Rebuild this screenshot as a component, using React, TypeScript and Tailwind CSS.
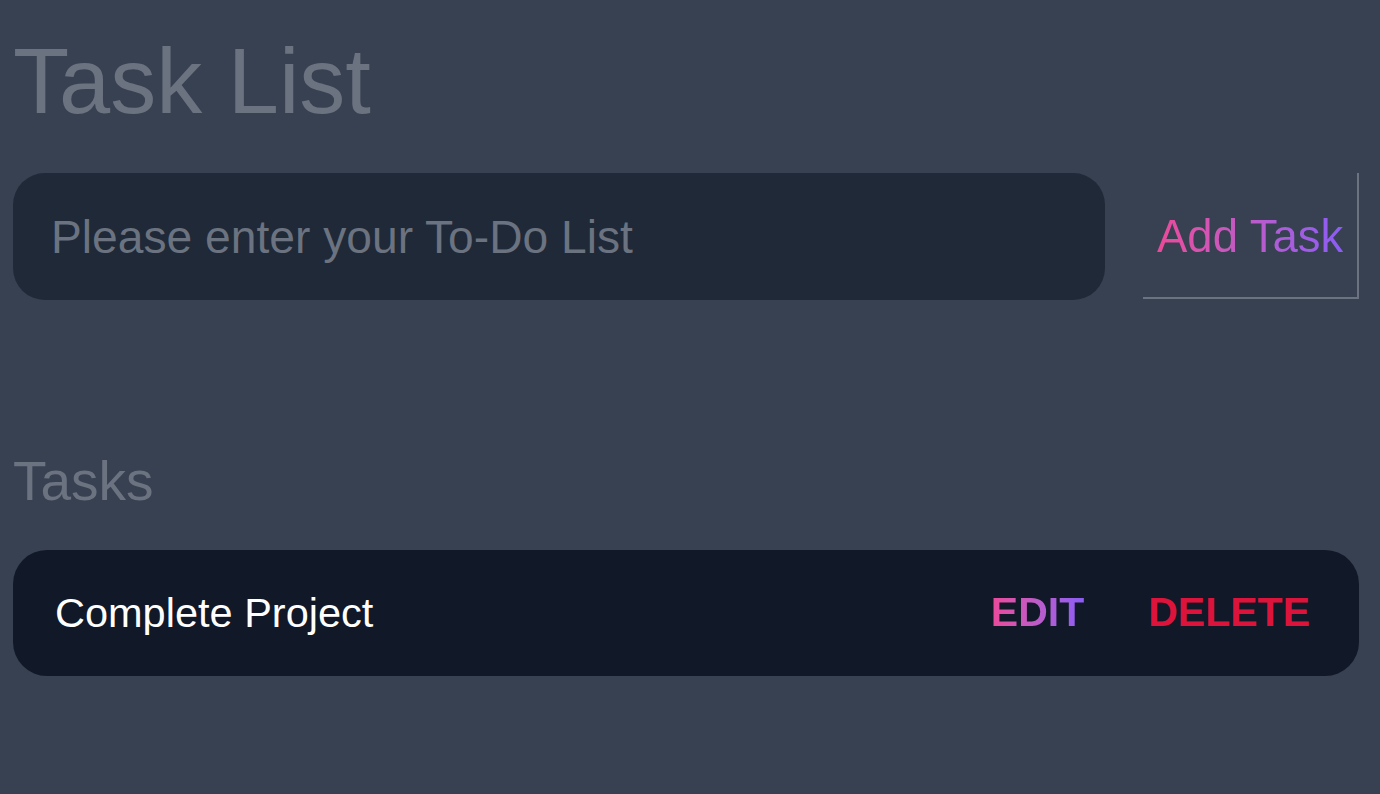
import React, { useState } from 'react';

type Task = { id: number; text: string };

export default function App() {
  const [tasks] = useState<Task[]>([{ id: 1, text: 'Complete Project' }]);
  const [value, setValue] = useState('');

  return (
    <div className="min-h-screen w-full bg-[#374151] pl-[13px] pr-[21px] pt-[26px] font-['Liberation_Sans',Arial,sans-serif]">
      {/* Header */}
      <h1 className="text-[92px] leading-[110px] text-[#6b7280]">Task List</h1>

      {/* New task form */}
      <div className="mt-[37px] flex items-stretch gap-[38px]">
        <input
          type="text"
          value={value}
          onChange={(e) => setValue(e.target.value)}
          placeholder="Please enter your To-Do List"
          className="h-[127px] flex-1 rounded-[32px] bg-[#1f2937] px-[38px] text-[46.2px] text-gray-300 outline-none placeholder:text-[#6b7280]"
        />
        <button className="h-[126px] w-[216px] border-r-2 border-b-2 border-[#6b7280] pl-[14px] pt-[4px] text-left text-[45.5px]">
          <span className="bg-gradient-to-r from-[#ec4899] to-[#8b5cf6] bg-clip-text text-transparent">
            Add Task
          </span>
        </button>
      </div>

      {/* Task list */}
      <h2 className="mt-[151px] text-[55px] leading-[60px] text-[#6b7280]">Tasks</h2>

      <ul className="mt-[39px] flex flex-col gap-4">
        {tasks.map((task) => (
          <li
            key={task.id}
            className="flex h-[126px] items-center justify-between rounded-[34px] bg-[#111827] pl-[42px] pr-[49px]"
          >
            <span className="text-[41.5px] text-white">{task.text}</span>
            <div className="flex items-center gap-[64px]">
              <button className="text-[41px] font-bold">
                <span className="bg-gradient-to-r from-[#ec4899] to-[#8b5cf6] bg-clip-text text-transparent">
                  EDIT
                </span>
              </button>
              <button className="text-[41px] font-bold text-[#dc143c]">DELETE</button>
            </div>
          </li>
        ))}
      </ul>
    </div>
  );
}
